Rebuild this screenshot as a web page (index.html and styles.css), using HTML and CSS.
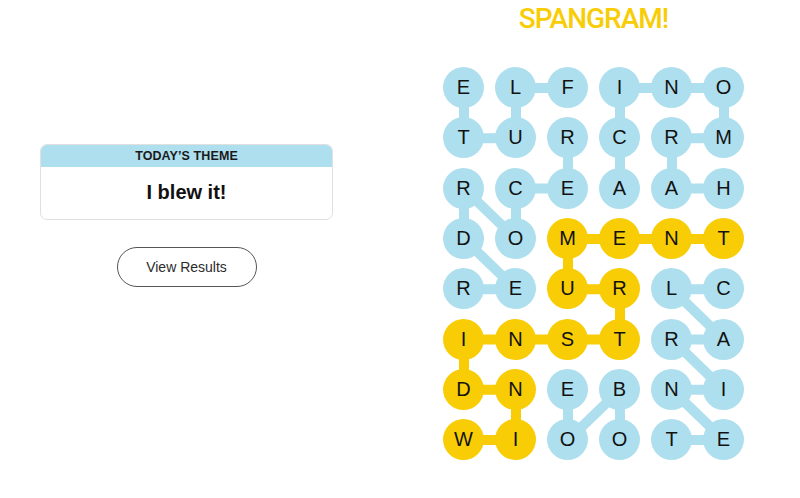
FILE: index.html
```html
<!DOCTYPE html>
<html lang="en">
<head>
<meta charset="utf-8">
<title>Strands</title>
<link rel="stylesheet" href="styles.css">
</head>
<body>
<main class="page">
  <section class="theme-panel">
    <div class="theme-card">
      <div class="theme-head">TODAY’S THEME</div>
      <div class="theme-body">I blew it!</div>
    </div>
    <button class="results-btn" type="button">View Results</button>
  </section>
  <section class="board-panel">
    <h1 class="spangram">SPANGRAM!</h1>
    <div class="board">
      <svg class="links" width="312" height="403" viewBox="0 0 312 403" aria-hidden="true">
        <g fill="none" stroke="#aedfee" stroke-width="10" stroke-linejoin="round">
          <polyline points="130,25 78,25 78,75.3 26,75.3 26,25"/>
          <polyline points="130,75.3 130,125.6 78,125.6 78,175.9 26,125.6 26,175.9 78,226.2 26,226.2"/>
          <polyline points="286,125.6 234,125.6 234,75.3 286,75.3 286,25 234,25 182,25 182,75.3 182,125.6"/>
          <polyline points="286,226.2 234,226.2 286,276.5 234,276.5 286,326.8 234,326.8 286,377.1 234,377.1"/>
          <polyline points="182,377.1 182,326.8 130,377.1 130,326.8"/>
        </g>
        <polyline fill="none" stroke="#f8cd05" stroke-width="10" stroke-linejoin="round" points="26,377.1 78,377.1 78,326.8 26,326.8 26,276.5 78,276.5 130,276.5 182,276.5 182,226.2 130,226.2 130,175.9 182,175.9 234,175.9 286,175.9"/>
      </svg>
      <div class="cells">
        <span class="cell"><span class="dot blue">E</span></span>
        <span class="cell"><span class="dot blue">L</span></span>
        <span class="cell"><span class="dot blue">F</span></span>
        <span class="cell"><span class="dot blue">I</span></span>
        <span class="cell"><span class="dot blue">N</span></span>
        <span class="cell"><span class="dot blue">O</span></span>

        <span class="cell"><span class="dot blue">T</span></span>
        <span class="cell"><span class="dot blue">U</span></span>
        <span class="cell"><span class="dot blue">R</span></span>
        <span class="cell"><span class="dot blue">C</span></span>
        <span class="cell"><span class="dot blue">R</span></span>
        <span class="cell"><span class="dot blue">M</span></span>

        <span class="cell"><span class="dot blue">R</span></span>
        <span class="cell"><span class="dot blue">C</span></span>
        <span class="cell"><span class="dot blue">E</span></span>
        <span class="cell"><span class="dot blue">A</span></span>
        <span class="cell"><span class="dot blue">A</span></span>
        <span class="cell"><span class="dot blue">H</span></span>

        <span class="cell"><span class="dot blue">D</span></span>
        <span class="cell"><span class="dot blue">O</span></span>
        <span class="cell"><span class="dot gold">M</span></span>
        <span class="cell"><span class="dot gold">E</span></span>
        <span class="cell"><span class="dot gold">N</span></span>
        <span class="cell"><span class="dot gold">T</span></span>

        <span class="cell"><span class="dot blue">R</span></span>
        <span class="cell"><span class="dot blue">E</span></span>
        <span class="cell"><span class="dot gold">U</span></span>
        <span class="cell"><span class="dot gold">R</span></span>
        <span class="cell"><span class="dot blue">L</span></span>
        <span class="cell"><span class="dot blue">C</span></span>

        <span class="cell"><span class="dot gold">I</span></span>
        <span class="cell"><span class="dot gold">N</span></span>
        <span class="cell"><span class="dot gold">S</span></span>
        <span class="cell"><span class="dot gold">T</span></span>
        <span class="cell"><span class="dot blue">R</span></span>
        <span class="cell"><span class="dot blue">A</span></span>

        <span class="cell"><span class="dot gold">D</span></span>
        <span class="cell"><span class="dot gold">N</span></span>
        <span class="cell"><span class="dot blue">E</span></span>
        <span class="cell"><span class="dot blue">B</span></span>
        <span class="cell"><span class="dot blue">N</span></span>
        <span class="cell"><span class="dot blue">I</span></span>

        <span class="cell"><span class="dot gold">W</span></span>
        <span class="cell"><span class="dot gold">I</span></span>
        <span class="cell"><span class="dot blue">O</span></span>
        <span class="cell"><span class="dot blue">O</span></span>
        <span class="cell"><span class="dot blue">T</span></span>
        <span class="cell"><span class="dot blue">E</span></span>
      </div>
    </div>
  </section>
</main>
</body>
</html>
```

FILE: styles.css
```css
html, body {
  margin: 0;
  padding: 0;
  background: #ffffff;
}

body {
  font-family: "Liberation Sans", Arial, sans-serif;
  color: #000000;
}

.page {
  display: flex;
  align-items: flex-start;
  padding-left: 40px;
  height: 498px;
  box-sizing: border-box;
}

.theme-panel {
  width: 293px;
  padding-top: 144px;
  display: flex;
  flex-direction: column;
  align-items: center;
}

.theme-card {
  width: 100%;
  box-sizing: border-box;
  border: 1px solid #e0e0e0;
  border-radius: 7px;
  overflow: hidden;
  background: #ffffff;
}

.theme-head {
  background: #aedfee;
  height: 22px;
  line-height: 23px;
  text-align: center;
  font-size: 12.5px;
  font-weight: 700;
  letter-spacing: 0.1px;
  color: #1a1a1a;
}

.theme-body {
  height: 52px;
  display: flex;
  align-items: center;
  justify-content: center;
  padding-bottom: 1px;
  box-sizing: border-box;
  font-size: 20px;
  font-weight: 700;
  color: #111111;
}

.results-btn {
  margin-top: 27px;
  width: 140px;
  height: 40px;
  border: 1px solid #555555;
  border-radius: 20px;
  background: #ffffff;
  font-family: "Liberation Sans", Arial, sans-serif;
  font-size: 14px;
  color: #2b2b2b;
  padding: 0;
}

.board-panel {
  margin-left: 104.5px;
  width: 312px;
  display: flex;
  flex-direction: column;
  align-items: center;
}

.spangram {
  margin: 0;
  font-family: Roboto, "Liberation Sans", sans-serif;
  font-weight: 500;
  font-size: 28px;
  line-height: 38px;
  letter-spacing: -1px;
  color: #f8cd05;
}

.board {
  position: relative;
  margin-top: 24.5px;
  width: 312px;
  height: 402.4px;
}

.links {
  position: absolute;
  left: 0;
  top: 0;
}

.cells {
  position: relative;
  display: grid;
  grid-template-columns: repeat(6, 52px);
  grid-template-rows: repeat(8, 50.3px);
}

.cell {
  display: flex;
  align-items: center;
  justify-content: center;
}

.dot {
  width: 41px;
  height: 41px;
  border-radius: 50%;
  display: flex;
  align-items: center;
  justify-content: center;
  font-size: 20px;
  color: #121212;
}

.dot.blue {
  background: #aedfee;
}

.dot.gold {
  background: #f8cd05;
}
```
